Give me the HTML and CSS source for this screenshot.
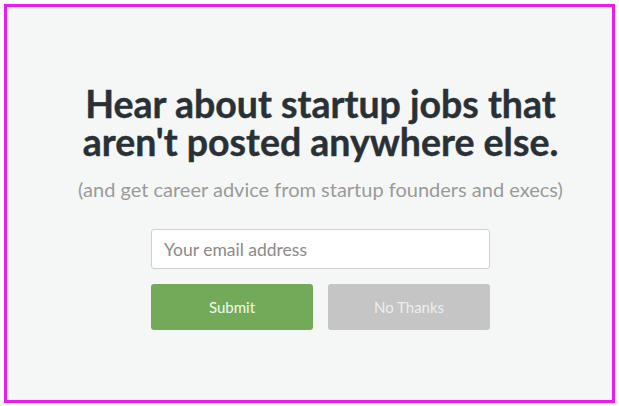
FILE: index.html
```html
<!DOCTYPE html>
<html>
<head>
<meta charset="utf-8">
<link rel="stylesheet" href="styles.css">
</head>
<body>
<div class="frame">
  <div class="content">
    <h1 class="title">Hear about startup jobs that<br>aren't posted anywhere else.</h1>
    <p class="subtitle">(and get career advice from startup founders and execs)</p>
    <form class="form">
      <input class="email" type="text" placeholder="Your email address">
      <div class="buttons">
        <button type="button" class="btn btn-submit">Submit</button>
        <button type="button" class="btn btn-no">No Thanks</button>
      </div>
    </form>
  </div>
</div>
</body>
</html>
```
FILE: styles.css
```css
html, body {
  margin: 0;
  padding: 0;
  background: #ffffff;
}
body {
  font-family: Lato, "Open Sans", sans-serif;
}
.frame {
  box-sizing: border-box;
  width: 611px;
  height: 399px;
  margin: 4px 0 0 4px;
  padding-left: 22px;
  border: 3px solid #e81ee8;
  background: #f5f7f6;
  display: flex;
  flex-direction: column;
  align-items: center;
}
.content {
  padding-top: 78px;
  display: flex;
  flex-direction: column;
  align-items: center;
}
.title {
  margin: 0;
  font-size: 37.5px;
  line-height: 38px;
  font-weight: 700;
  color: #2a3136;
  text-align: center;
  white-space: nowrap;
  -webkit-text-stroke: 0.4px #2a3136;
}
.subtitle {
  margin: 16px 0 0;
  font-size: 20px;
  line-height: 24px;
  font-weight: 400;
  color: #9a9a9a;
  text-align: center;
  white-space: nowrap;
}
.form {
  margin-top: 28px;
  width: 339px;
  display: flex;
  flex-direction: column;
  gap: 15px;
}
.email {
  box-sizing: border-box;
  width: 100%;
  height: 40px;
  margin: 0;
  padding: 0 12px;
  border: 1px solid #cfd0d0;
  border-radius: 3px;
  background: #ffffff;
  font-family: Lato, sans-serif;
  font-size: 17.5px;
  color: #555;
  outline: none;
}
.email::placeholder {
  color: #8a8a8a;
}
.buttons {
  display: flex;
  gap: 15px;
}
.btn {
  flex: 1;
  height: 46px;
  border: none;
  border-radius: 3px;
  font-family: Lato, sans-serif;
  font-size: 15px;
  cursor: pointer;
}
.btn-submit {
  background: #72aa5a;
  color: #f4f8f0;
}
.btn-no {
  background: #c4c5c4;
  color: #eeeeee;
}
```
